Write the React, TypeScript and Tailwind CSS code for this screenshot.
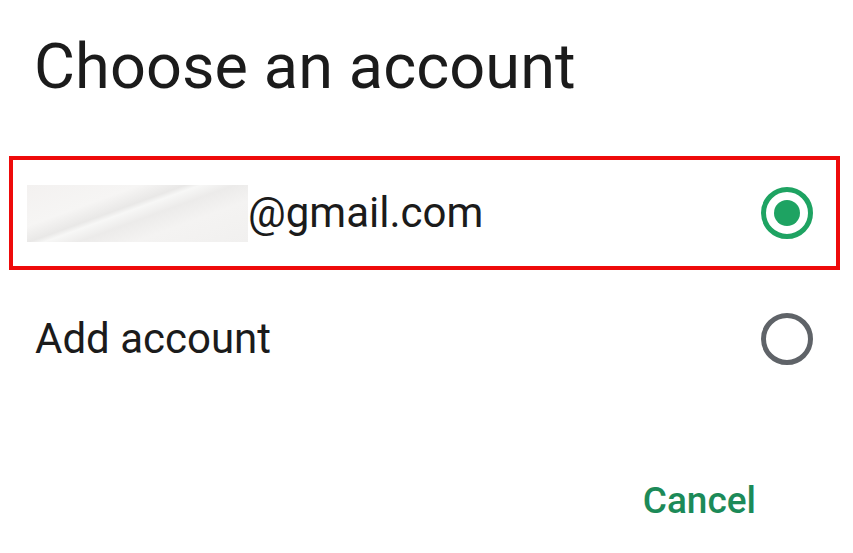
import React, { useState } from 'react';

type Account = { id: string; label: string };

const RadioMark: React.FC<{ checked: boolean }> = ({ checked }) => (
  <svg width="52" height="52" viewBox="0 0 52 52" className="shrink-0">
    <circle
      cx="26"
      cy="26"
      r="23.5"
      fill="none"
      stroke={checked ? '#1ea362' : '#5f6368'}
      strokeWidth="5"
    />
    {checked && <circle cx="26" cy="26" r="13" fill="#1ea362" />}
  </svg>
);

export default function App() {
  const [selected, setSelected] = useState('gmail');

  const accounts: Account[] = [{ id: 'gmail', label: '@gmail.com' }];

  return (
    <div className="w-[853px] h-[553px] bg-white overflow-hidden font-['Roboto',_'Noto_Sans',_sans-serif] text-[#1b1b1b]">
      {/* Title */}
      <div className="h-[132px] flex items-center px-[34px]">
        <h1 className="text-[63px] leading-none font-normal tracking-[0.1px]">Choose an account</h1>
      </div>

      {/* Selected account, highlighted */}
      {accounts.map((acc) => (
        <button
          key={acc.id}
          onClick={() => setSelected(acc.id)}
          className="mt-[24px] ml-[9px] mr-[13px] w-[831px] h-[114px] border-[4px] border-[#ee0a0a] flex items-center pl-[14px] pr-[23px] text-left"
        >
          <div className="w-[221px] h-[57px] shrink-0 bg-[linear-gradient(160deg,#f3f1f0_0%,#f6f5f4_30%,#e9e8e7_42%,#f7f7f6_46%,#ecebea_55%,#f4f3f2_70%,#f1f0ef_100%)]" />
          <span className="flex-1 text-[42px] leading-none">{acc.label}</span>
          <RadioMark checked={selected === acc.id} />
        </button>
      ))}

      {/* Add account */}
      <button
        onClick={() => setSelected('add')}
        className="mt-[12px] w-full h-[114px] flex items-center pl-[35px] pr-[40px] text-left"
      >
        <span className="flex-1 text-[42px] leading-none">Add account</span>
        <RadioMark checked={selected === 'add'} />
      </button>

      {/* Actions */}
      <div className="mt-[64px] h-[80px] flex items-center justify-end pr-[97px]">
        <button className="text-[37px] leading-none font-medium text-[#1c8a58]">Cancel</button>
      </div>
    </div>
  );
}
